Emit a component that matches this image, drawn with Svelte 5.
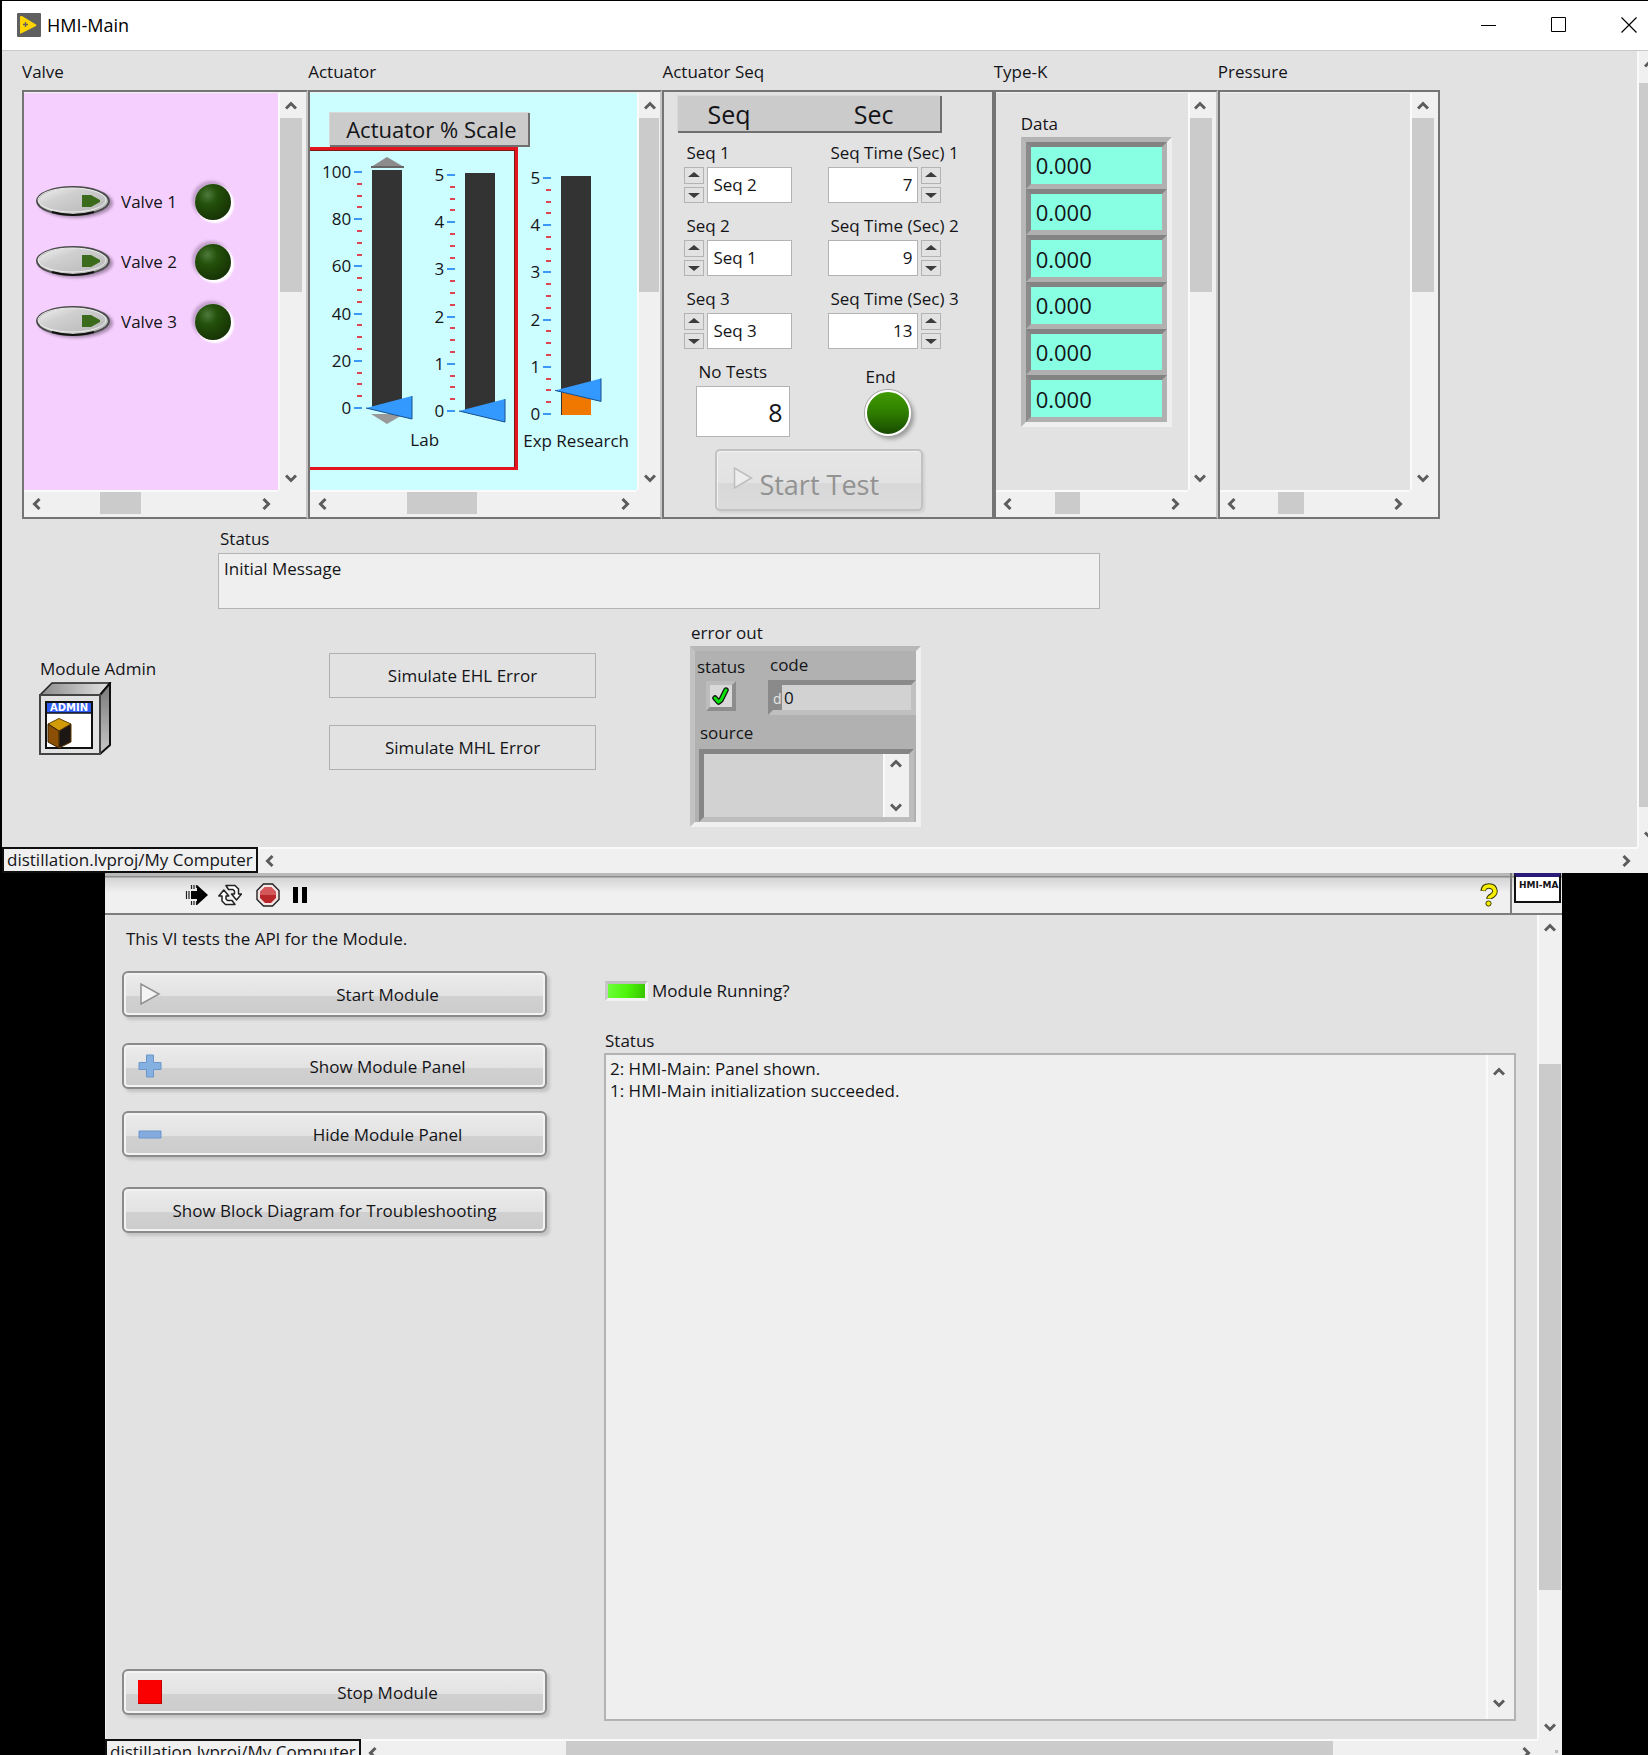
<script>
  const valves = $state([
    { name: 'Valve 1', open: false },
    { name: 'Valve 2', open: false },
    { name: 'Valve 3', open: false }
  ]);
  const sequences = $state(['Seq 2', 'Seq 1', 'Seq 3']);
  const times = $state([7, 9, 13]);
  const readings = ['0.000', '0.000', '0.000', '0.000', '0.000', '0.000'];
  const options = ['Seq 1', 'Seq 2', 'Seq 3'];
  const levels = $state([0, 0, 0.5]);
  const log = '2: HMI-Main: Panel shown.\n1: HMI-Main initialization succeeded.';
  let tests = $state(8);

  const TOP = 18;
  const SPAN = 236;

  function cycle(i, step) {
    const at = options.indexOf(sequences[i]);
    sequences[i] = options[(at + step + options.length) % options.length];
  }
</script>

{#snippet chevron(dir)}
  <svg class="chev {dir}" width="12" height="12" viewBox="0 0 12 12" aria-hidden="true">
    <path d="M1 8.5 6 3.5 11 8.5" fill="none" stroke="#5c5c5c" stroke-width="3" />
  </svg>
{/snippet}

{#snippet vbar(start, size)}
  <div class="vbar">
    <button aria-label="Scroll up">{@render chevron('up')}</button>
    <div class="track">
      {#if size}<div class="thumb" style:top="{start}%" style:height="{size}%"></div>{/if}
    </div>
    <button aria-label="Scroll down">{@render chevron('down')}</button>
  </div>
{/snippet}

{#snippet hbar(start, size)}
  <div class="hbar">
    <button aria-label="Scroll left">{@render chevron('left')}</button>
    <div class="track">
      {#if size}<div class="thumb" style:left="{start}%" style:width="{size}%"></div>{/if}
    </div>
    <button aria-label="Scroll right">{@render chevron('right')}</button>
  </div>
{/snippet}

{#snippet slider(i, name, labels, max, arrows)}
  {@const y = TOP + SPAN - (levels[i] / max) * SPAN}
  <div class="slider">
    <div class="scale">
      {#each labels as l}<span>{l}</span>{/each}
    </div>
    <div class="gauge">
      <svg width="60" height="272" viewBox="0 0 60 272" aria-hidden="true">
        {#each Array(21) as _, t}
          {#if t % 4 === 0}
            <rect x="0" y={Math.round(TOP + (t * SPAN) / 20) - 1} width="8" height="2" fill="#3d97f5" />
          {:else}
            <rect x="3" y={Math.round(TOP + (t * SPAN) / 20) - 1} width="5" height="2" fill="#dc4650" />
          {/if}
        {/each}
        {#if arrows}
          <path d="M17 13 33 3 50 13z" fill="#8c8c8c" />
          <path d="M17 12h33v2H17z" fill="#666" />
          <path d="M17 260 33 270 50 260z" fill="#999" />
        {/if}
        <rect x="18" y="16" width="30" height="239" fill="#333" />
        {#if levels[i] > 0}
          <rect x="19" y={y} width="29" height={TOP + SPAN + 1 - y} fill="#f07800" />
        {/if}
        <path d="M12 {y} L58 {y - 12} V{y + 11}z" fill="#3399ff" />
        <path d="M12 {y} L58 {y + 11} V{y - 12}" fill="none" stroke="#17508c" stroke-width="1" />
      </svg>
      <input type="range" min="0" {max} step="any" bind:value={levels[i]} aria-label={name} />
    </div>
  </div>
{/snippet}

{#snippet arrowPair(up, down)}
  <span class="spin">
    <button aria-label="Increment" onclick={up}>
      <svg width="12" height="6" viewBox="0 0 12 6"><path d="M0 5 6 0l6 5z" fill="#3c3c3c" /></svg>
    </button>
    <button aria-label="Decrement" onclick={down}>
      <svg width="12" height="6" viewBox="0 0 12 6"><path d="M0 1 6 6l6-5z" fill="#3c3c3c" /></svg>
    </button>
  </span>
{/snippet}

<div class="desktop">
  <main class="window">
    <header class="titlebar">
      <svg width="24" height="24" viewBox="0 0 24 24" aria-hidden="true">
        <rect width="24" height="24" rx="1" fill="#5f5f5f" />
        <path d="M3 4v16q0 1 1 .6L19 13q1-.8 0-1.500L5 3Q3 2.500 3 4z" fill="#fdd400" />
        <path d="M6 11.500h5M8.500 9v5" stroke="#5f5f5f" stroke-width="1.300" />
      </svg>
      <h1>HMI-Main</h1>
      <div class="caption">
        <button aria-label="Minimize"><svg width="16" height="16" viewBox="0 0 16 16"><path d="M0 8.500h15" stroke="#000" /></svg></button>
        <button aria-label="Maximize"><svg width="16" height="16" viewBox="0 0 16 16"><path d="M.5.5h14v14H.5z" fill="none" stroke="#000" /></svg></button>
        <button aria-label="Close"><svg width="16" height="16" viewBox="0 0 16 16"><path d="M.5.5l15 15M15.500.5l-15 15" stroke="#000" stroke-width="1.200" /></svg></button>
      </div>
    </header>

    <div class="view">
      <div class="panel-face">
        <div class="subpanels">
          <section>
            <h2>Valve</h2>
            <div class="pane">
              <div class="canvas pink">
                {#each valves as v}
                  <div class="valve">
                    <button class="toggle" aria-label={v.name} aria-pressed={v.open} onclick={() => (v.open = !v.open)}>
                      <svg width="80" height="38" viewBox="0 0 80 38">
                        <defs>
                          <linearGradient id="oval" x1="0" y1="0" x2="1" y2="1">
                            <stop offset="0" stop-color="#f6f6f6" />
                            <stop offset=".35" stop-color="#d0d0d0" />
                            <stop offset="1" stop-color="#b4b4b4" />
                          </linearGradient>
                          <filter id="soft" x="-20%" y="-30%" width="140%" height="160%"><feGaussianBlur stdDeviation="1.500" /></filter>
                        </defs>
                        <ellipse cx="41" cy="20" rx="37" ry="15" fill="#8d7594" opacity=".75" filter="url(#soft)" />
                        <ellipse cx="38" cy="18" rx="36" ry="14" fill="url(#oval)" stroke="#4c4c4c" stroke-width="2" />
                        <ellipse cx="37" cy="17" rx="34" ry="12" fill="none" stroke="#ededed" stroke-width="1" />
                        <path d="M17 29Q38 35 59 29" fill="none" stroke="#111" stroke-width="2" />
                        <path d="M47 12h9l9 5v2l-9 5h-9z" fill="#3c6b1c" />
                      </svg>
                    </button>
                    <span>{v.name}</span>
                    <i class="led dark"></i>
                  </div>
                {/each}
              </div>
              {@render vbar(0, 50)}
              {@render hbar(25, 20)}
            </div>
          </section>

          <section>
            <h2>Actuator</h2>
            <div class="pane wide">
              <div class="canvas cyan">
                <div class="plate scale-title">Actuator % Scale</div>
                <div class="gauges">
                  <div class="lab">
                    <div class="pair">
                      {@render slider(0, 'Lab percent', [100, 80, 60, 40, 20, 0], 100, true)}
                      {@render slider(1, 'Lab', [5, 4, 3, 2, 1, 0], 5, false)}
                    </div>
                    <span>Lab</span>
                  </div>
                  <div class="research">
                    {@render slider(2, 'Exp Research', [5, 4, 3, 2, 1, 0], 5, false)}
                    <span>Exp Research</span>
                  </div>
                </div>
              </div>
              {@render vbar(0, 50)}
              {@render hbar(26, 25)}
            </div>
          </section>

          <section>
            <h2>Actuator Seq</h2>
            <div class="pane bare">
              <div class="canvas seq">
                <div class="plate seq-title"><span>Seq</span><span>Sec</span></div>
                {#each sequences as s, i}
                  <div class="seq-row">
                    <div class="field">
                      <label for="seq{i}">Seq {i + 1}</label>
                      <div class="ctl">
                        {@render arrowPair(() => cycle(i, 1), () => cycle(i, -1))}
                        <select id="seq{i}" bind:value={sequences[i]}>
                          {#each options as o}<option>{o}</option>{/each}
                        </select>
                      </div>
                    </div>
                    <div class="field">
                      <label for="time{i}">Seq Time (Sec) {i + 1}</label>
                      <div class="ctl">
                        <input id="time{i}" type="text" bind:value={times[i]} />
                        {@render arrowPair(() => (times[i] = +times[i] + 1), () => (times[i] = +times[i] - 1))}
                      </div>
                    </div>
                  </div>
                {/each}
                <div class="tests-row">
                  <div class="tests">
                    <label for="tests">No Tests</label>
                    <input id="tests" type="text" bind:value={tests} />
                  </div>
                  <div class="end">
                    <span>End</span>
                    <i class="led-end"></i>
                  </div>
                </div>
                <button class="start-test" disabled>
                  <svg width="20" height="24" viewBox="0 0 20 24"><path d="M1.500 2v20L18.500 12z" fill="#ededed" stroke="#bdbdbd" stroke-width="1.500" /></svg>
                  Start Test
                </button>
              </div>
            </div>
          </section>

          <section>
            <h2>Type-K</h2>
            <div class="pane">
              <div class="canvas typek">
                <span>Data</span>
                <div class="array">
                  {#each readings as r}<output>{r}</output>{/each}
                </div>
              </div>
              {@render vbar(0, 50)}
              {@render hbar(24, 18)}
            </div>
          </section>

          <section>
            <h2>Pressure</h2>
            <div class="pane">
              <div class="canvas"></div>
              {@render vbar(0, 50)}
              {@render hbar(24, 18)}
            </div>
          </section>
        </div>

        <div class="message">
          <label for="msg">Status</label>
          <textarea id="msg" readonly>Initial Message</textarea>
        </div>

        <div class="tools">
          <div class="admin">
            <span>Module Admin</span>
            <svg width="73" height="73" viewBox="0 0 73 73" role="img" aria-label="Module Admin">
              <defs>
                <linearGradient id="lid" x1="0" x2="1"><stop offset="0" stop-color="#8a8a8a" /><stop offset="1" stop-color="#e4e4e4" /></linearGradient>
                <linearGradient id="side" x1="0" y1="0" x2="0" y2="1"><stop offset="0" stop-color="#777" /><stop offset="1" stop-color="#c8c8c8" /></linearGradient>
              </defs>
              <path d="M1 13 13 1h58L61 13z" fill="url(#lid)" stroke="#222" stroke-width="1.500" />
              <path d="M61 13 71 1v62L61 72z" fill="url(#side)" stroke="#111" stroke-width="2" />
              <path d="M1 13h60v59H1z" fill="#e2e2e2" stroke="#444" stroke-width="2" />
              <path d="M7 20h46v46H7z" fill="#fff" stroke="#111" stroke-width="2" />
              <path d="M8 21h44v10H8z" fill="#2f5cf0" />
              <path d="M7 31h46" stroke="#111" stroke-width="1.500" />
              <text x="30" y="29" text-anchor="middle" class="tag">ADMIN</text>
              <path d="M9 42 20 36.500 32 42 20 49z" fill="#d19b0a" stroke="#5f4300" />
              <path d="M9 42 20 49v17L9 60z" fill="#8c4f06" stroke="#3a2200" />
              <path d="M32 42 20 49v17l12-6z" fill="#1c1714" stroke="#5f3a05" />
            </svg>
          </div>
          <div class="sims">
            <button>Simulate EHL Error</button>
            <button>Simulate MHL Error</button>
          </div>
          <div class="error">
            <span class="error-name">error out</span>
            <div class="cluster">
              <div class="cluster-top">
                <div class="stat">
                  <span>status</span>
                  <div class="check">
                    <svg width="18" height="20" viewBox="0 0 18 20" role="img" aria-label="no error"><path d="M3 12l3.500 4L9 14l5-10" fill="none" stroke="#111" stroke-width="5.500" stroke-linejoin="round" stroke-linecap="round" /><path d="M3 12l3.500 4L9 14l5-10" fill="none" stroke="#0be00b" stroke-width="3" stroke-linejoin="round" stroke-linecap="round" /></svg>
                  </div>
                </div>
                <div class="code">
                  <label for="code">code</label>
                  <div class="code-box"><small>d</small><input id="code" type="text" value="0" readonly /></div>
                </div>
              </div>
              <label for="source">source</label>
              <div class="source-box">
                <textarea id="source" readonly></textarea>
                {@render vbar(0, 0)}
              </div>
            </div>
          </div>
        </div>
      </div>
      {@render vbar(1, 97)}
    </div>
    <footer class="bottom">
      <span class="ctx">distillation.lvproj/My Computer</span>
      {@render hbar(0, 0)}
    </footer>
  </main>

  <div class="window tester">
    <div class="toolbar">
      <button aria-label="Run">
        <svg width="24" height="24" viewBox="0 0 24 24"><path d="M6 8h6V2l11 10-11 10v-6H6z" fill="#000" /><path d="M1.500 8v8M4 8v8M6.500 2v4M9 2v4M11.500 2v3M6.500 18v4M9 18v4M11.500 18v4" stroke="#222" stroke-width="1.200" /></svg>
      </button>
      <button aria-label="Run continuously">
        <svg width="24" height="24" viewBox="0 0 24 24" fill="#fff" stroke="#222" stroke-width="1.500" stroke-linejoin="round"><path d="M8 2.500h9l3.500 3.500v5H23.500l-5 6-5-6H16.500V8L15 6.500H10.500z" /><path d="M17 21.500H7.500L4 18v-5H.8L5.800 7l5 6H8v3l1.500 1.500H14z" /></svg>
      </button>
      <button aria-label="Abort" class="abort">
        <svg width="24" height="24" viewBox="0 0 24 24"><path d="M7.500 1h9L23 7.500v9L16.500 23h-9L1 16.500v-9z" fill="#f4e4e4" stroke="#222" stroke-width="1.400" /><path d="M9 4h6l5 5v6l-5 5H9l-5-5V9z" fill="#b9262a" /><path d="M9 4h6l5 5v3H4V9z" fill="#d4575a" /></svg>
      </button>
      <button aria-label="Pause">
        <svg width="16" height="16" viewBox="0 0 16 16"><path d="M0 0h5v16H0zM9 0h5v16H9z" fill="#000" /></svg>
      </button>
      <button aria-label="Help" class="help">
        <svg width="18" height="24" viewBox="0 0 18 24"><path d="M3 8Q3.500 3 9 3t6 5q0 3-3.500 5Q9 14.300 9 16" fill="none" stroke="#3a3a00" stroke-width="5.500" /><path d="M3.500 7.500Q4 3 9 3t6 5q0 3-3.500 5Q9 14.300 9 15.500" fill="none" stroke="#f6ee00" stroke-width="3.600" /><circle cx="8.500" cy="20.500" r="2.600" fill="#f6ee00" stroke="#3a3a00" /></svg>
      </button>
      <div class="badge"><div>HMI-MA</div></div>
    </div>
    <div class="view">
      <div class="api">
        <div class="actions">
          <p>This VI tests the API for the Module.</p>
          <button class="btn">
            <svg width="24" height="24" viewBox="0 0 24 24"><path d="M3 2v20l18-10z" fill="#f4f4f4" stroke="#8f8f8f" stroke-width="1.500" /></svg>
            <span>Start Module</span>
          </button>
          <button class="btn show">
            <svg width="24" height="24" viewBox="0 0 24 24"><path d="M8.500 1h7v7.500H23v7h-7.500V23h-7v-7.500H1v-7h7.500z" fill="#84b0e2" stroke="#6a96cc" /></svg>
            <span>Show Module Panel</span>
          </button>
          <button class="btn hide">
            <svg width="24" height="24" viewBox="0 0 24 24"><path d="M1 9h22v7H1z" fill="#84aade" stroke="#6a96cc" /></svg>
            <span>Hide Module Panel</span>
          </button>
          <button class="btn diagram"><span>Show Block Diagram for Troubleshooting</span></button>
          <button class="btn stop">
            <svg width="24" height="24" viewBox="0 0 24 24"><path d="M0 0h24v24H0z" fill="#c40000" /><path d="M0 0h23v23H0z" fill="#fa0000" /></svg>
            <span>Stop Module</span>
          </button>
        </div>
        <div class="results">
          <div class="running"><i></i><span>Module Running?</span></div>
          <label for="log">Status</label>
          <div class="log">
            <textarea id="log" readonly value={log}></textarea>
            {@render vbar(0, 0)}
          </div>
        </div>
      </div>
      {@render vbar(16, 68)}
    </div>
    <footer class="bottom">
      <span class="ctx">distillation.lvproj/My Computer</span>
      {@render hbar(16, 68)}
      <svg width="24" height="24" viewBox="0 0 24 24" aria-hidden="true"><path d="M17 11h3v3h-3zM12 16h3v3h-3zM17 16h3v3h-3z" fill="#bdbdbd" /></svg>
    </footer>
  </div>
</div>

<style>
  :global(body) {
    background: #000;
  }
  .desktop {
    font: 17px/22px 'Open Sans', 'Noto Sans', sans-serif;
    color: #141418;
    background: #000;
    min-height: 100vh;
    overflow: hidden;
    display: flex;
    flex-direction: column;
    box-sizing: border-box;
    padding-top: 1px;
    --bar: 25px;
    --face: #e2e2e2;
  }
  .desktop :is(div, section, button, input, select, textarea, span) {
    box-sizing: border-box;
  }
  button,
  input,
  select,
  textarea {
    font: inherit;
    color: inherit;
    margin: 0;
    padding: 0;
    border: 0;
    border-radius: 0;
    background: none;
    appearance: none;
    resize: none;
    min-width: 0;
  }
  h1,
  h2,
  p {
    margin: 0;
    font: inherit;
  }
  svg {
    display: block;
    flex: none;
  }
  .window {
    margin-left: 2px;
    background: var(--face);
  }
  .titlebar {
    display: flex;
    align-items: center;
    gap: 6px;
    height: 50px;
    box-sizing: border-box;
    padding: 0 11px 2px 15px;
    background: #fff;
    border-bottom: 1px solid #c9c9c9;
  }
  .titlebar h1 {
    font-size: 18px;
    color: #000;
  }
  .caption {
    margin-left: auto;
    display: flex;
    gap: 54px;
  }
  .view {
    display: grid;
    grid-template-columns: minmax(0, 1fr) var(--bar);
  }
  main .view,
  main .bottom {
    margin-right: -14px;
  }

  /* scroll bars */
  .vbar,
  .hbar {
    display: flex;
    background: #f0f0f0;
  }
  .vbar {
    flex-direction: column;
    border-left: 2px solid #fafafa;
  }
  .hbar {
    border-top: 2px solid #fafafa;
  }
  .vbar button,
  .hbar button {
    flex: none;
    width: var(--bar);
    height: var(--bar);
    display: grid;
    place-items: center;
  }
  .vbar button {
    width: 21px;
  }
  .hbar button {
    height: 23px;
  }
  .track {
    flex: 1;
    position: relative;
  }
  .thumb {
    position: absolute;
    background: #cbcbcb;
  }
  .vbar .thumb {
    left: 0;
    right: 1px;
  }
  .hbar .thumb {
    top: 0;
    bottom: 1px;
  }
  .down {
    transform: rotate(180deg);
  }
  .left {
    transform: rotate(-90deg);
  }
  .right {
    transform: rotate(90deg);
  }

  /* sub panels */
  .panel-face {
    padding: 10px 0 20px;
  }
  .subpanels {
    display: grid;
    grid-template-columns: 286fr 354fr 331fr 224fr 222fr;
    margin: 0 197px 0 20px;
  }
  h2 {
    height: 29px;
    white-space: nowrap;
  }
  section {
    min-width: 0;
  }
  .pane {
    display: grid;
    grid-template-columns: minmax(0, 1fr) var(--bar);
    grid-template-rows: 397px var(--bar);
    padding: 1px 3px 2px 0;
    border: 2px solid #747474;
    border-right: 2px solid #c6c6c6;
    background: #f0f0f0;
  }
  .wide {
    padding-right: 0;
    grid-template-columns: minmax(0, 1fr) 23px;
  }
  .bare {
    grid-template: 422px / minmax(0, 1fr);
    background: var(--face);
    border-right-color: #747474;
  }
  section:last-child .pane {
    border-right-color: #747474;
  }
  .canvas {
    background: var(--face);
    overflow: hidden;
  }
  .pink {
    background: #f5cffe;
    padding-top: 90px;
  }
  .cyan {
    background: #ccfdff;
  }
  .valve {
    display: flex;
    align-items: center;
    height: 38px;
    margin-bottom: 22px;
    padding-left: 11px;
  }
  .toggle {
    width: 86px;
  }
  .valve span {
    width: 74px;
  }
  .led {
    width: 36px;
    height: 36px;
    border-radius: 50%;
    background: radial-gradient(circle at 35% 30%, #4f7a3c, #24510b 28%, #1b3d06 60%, #0d2602);
    box-shadow: 2px 2px 2px 1px #fff, -2px -2px 3px 1px #c3a0cc;
  }
  .plate {
    background: #cbcbcb;
    border: solid #6f6f6f;
    border-width: 0 2px 2px 0;
    box-shadow: -1px -1px 0 #d9d9d9;
  }
  .scale-title {
    width: 200px;
    margin: 20px 0 0 20px;
    padding-left: 16px;
    font-size: 22px;
    line-height: 32px;
    height: 34px;
    white-space: nowrap;
    position: relative;
  }
  .gauges {
    display: flex;
  }
  .lab {
    width: 208px;
    height: 323px;
    border: 3px solid #e3141e;
    border-left: 0;
    box-shadow: inset 0 1px 0 #7c1a1a, inset -1px 0 0 #7c1a1a;
    display: flex;
    flex-direction: column;
    align-items: center;
    padding: 4px 0 0 24px;
  }
  .pair {
    display: flex;
    gap: 13px;
    align-self: flex-start;
    margin-left: -15px;
  }
  .slider {
    display: flex;
    gap: 3px;
  }
  .scale {
    width: 32px;
    height: 258px;
    margin-top: 7px;
    text-align: right;
    display: flex;
    flex-direction: column;
    justify-content: space-between;
  }
  .slider + .slider {
    padding-top: 3px;
  }
  .slider + .slider .scale,
  .research .scale {
    width: 17px;
  }
  .gauge {
    position: relative;
  }
  .gauge input {
    position: absolute;
    inset: 0;
    width: 100%;
    height: 100%;
    opacity: 0;
    writing-mode: vertical-lr;
    direction: rtl;
  }
  .research {
    padding: 13px 0 0 5px;
    white-space: nowrap;
  }
  .research > span {
    display: block;
    line-height: 18px;
  }
  .seq {
    padding: 3px 0 0 14px;
  }
  .seq-title {
    width: 264px;
    height: 37px;
    display: flex;
    justify-content: space-between;
    padding: 0 47px 0 29px;
    font-size: 25px;
    line-height: 36px;
  }
  .seq-row {
    display: grid;
    grid-template-columns: 144px 1fr;
    padding: 9px 0 0 6px;
    height: 73px;
    white-space: nowrap;
  }
  .field label {
    display: block;
    height: 25px;
    padding-left: 2px;
  }
  .ctl {
    display: flex;
    gap: 3px;
    height: 36px;
  }
  .spin {
    width: 20px;
    display: grid;
    gap: 3px;
  }
  .spin button {
    display: grid;
    place-items: center;
    border: 1px solid #b3b3b3;
  }
  select,
  .ctl input,
  .tests input {
    background: #fff;
    border: 1px solid #b3b3b3;
  }
  select {
    width: 85px;
    padding-left: 5px;
  }
  .ctl input {
    width: 90px;
    padding-right: 5px;
    text-align: right;
  }
  .tests-row {
    display: flex;
    padding: 9px 0 0 18px;
  }
  .tests {
    width: 169px;
    display: grid;
    gap: 3px;
  }
  .tests label {
    padding-left: 2px;
  }
  .tests input {
    width: 94px;
    height: 51px;
    font-size: 25px;
    text-align: right;
    padding-right: 7px;
  }
  .end {
    padding-top: 5px;
  }
  .led-end {
    display: block;
    width: 46px;
    height: 46px;
    margin-top: 2px;
    box-sizing: border-box;
    border-radius: 50%;
    border: 2px solid #fff;
    background: linear-gradient(#3f9b00, #2f7d00 50%, #174a00);
    box-shadow: 0 0 0 1px #a8a8a8, 3px 3px 4px #999;
  }
  .start-test {
    display: flex;
    align-items: center;
    gap: 6px;
    width: 208px;
    height: 62px;
    margin: 12px 0 0 37px;
    padding: 10px 0 0 16px;
    border: 2px solid #c2c2c2;
    border-radius: 5px;
    font-size: 27px;
    color: #929292;
    white-space: nowrap;
    background: linear-gradient(#e6e6e6, #e2e2e2 55%, #d8d8d8 56%, #dcdcdc);
    box-shadow: inset 1px 1px 0 #f3f3f3, 2px 2px 2px #d2d2d2;
  }
  .start-test svg {
    margin-top: -14px;
  }
  .typek {
    padding: 20px 0 0 25px;
  }
  .array {
    width: 151px;
    height: 290px;
    margin-top: 2px;
    border: 5px solid;
    border-color: #b3b3b3 #efefef #efefef #b8b8b8;
    display: grid;
  }
  .array output {
    box-sizing: border-box;
    background: #88ffe2;
    border: 5px solid;
    border-color: #838383 #b0b0b0 #b0b0b0 #8b8b8b;
    padding-left: 5px;
    font-size: 22px;
    display: flex;
    align-items: center;
  }

  /* lower half of the main panel */
  .message {
    margin: 9px 537px 0 216px;
  }
  .message label {
    display: block;
    height: 25px;
    padding-left: 2px;
  }
  .message textarea {
    display: block;
    width: 100%;
    height: 56px;
    padding: 4px 5px;
    background: #efefef;
    border: 1px solid #b3b3b3;
  }
  .tools {
    display: grid;
    grid-template-columns: 289px 361px 1fr;
    padding: 13px 0 0 37px;
  }
  .admin {
    padding-top: 36px;
  }
  .admin span {
    display: block;
    height: 24px;
    padding-left: 1px;
  }
  .tag {
    font: bold 10px 'DejaVu Sans', sans-serif;
    fill: #fff;
  }
  .sims {
    display: grid;
    grid-template: 45px 45px / 267px;
    gap: 27px;
    padding: 31px 0 0 1px;
  }
  .sims button {
    border: 1px solid #b0b0b0;
    padding-top: 1px;
  }
  .error-name {
    display: block;
    height: 24px;
    padding-left: 1px;
  }
  .error {
    padding-left: 1px;
  }
  .cluster {
    width: 231px;
    height: 181px;
    border: 5px solid;
    border-color: #b8b8b8 #f0f0f0 #f0f0f0 #c2c2c2;
    background: #b1b1b1;
  }
  .cluster-top {
    display: flex;
    height: 70px;
    padding: 3px 0 0 2px;
  }
  .stat {
    flex: none;
    width: 71px;
    padding-top: 2px;
  }
  .check {
    width: 30px;
    height: 30px;
    margin: 3px 0 0 9px;
    border: 4px solid;
    border-color: #bcbcbc #8d8d8d #8d8d8d #bcbcbc;
    background: #d9d9d9;
    display: grid;
    place-items: center;
  }
  .code {
    flex: 1;
    min-width: 0;
  }
  .code label {
    padding-left: 2px;
  }
  .code-box {
    display: flex;
    height: 35px;
    margin-top: 4px;
    border: 5px solid;
    border-color: #8a8a8a #c0c0c0 #c0c0c0 #8a8a8a;
    background: #d2d2d2;
  }
  .code-box small {
    background: #8a8a8a;
    color: #e6e6e6;
    font-size: 14px;
    line-height: 28px;
    width: 9px;
  }
  .code-box input {
    flex: 1;
    padding-left: 2px;
  }
  .cluster > label {
    display: block;
    height: 27px;
    padding: 1px 0 0 5px;
  }
  .source-box {
    height: 73px;
    margin: 0 2px 0 4px;
    border: 5px solid;
    border-color: #858585 #bdbdbd #bdbdbd #858585;
    background: #d2d2d2;
    display: grid;
    grid-template-columns: 1fr 26px;
  }
  .source-box textarea {
    width: 100%;
    height: 100%;
  }
  .source-box .vbar button {
    height: 20px;
  }

  .bottom {
    display: flex;
    height: 26px;
    background: #f0f0f0;
  }
  .bottom .hbar {
    flex: 1;
  }
  .ctx {
    border: 2px solid #101010;
    padding: 0 3px;
    background: #f0f0f0;
    white-space: nowrap;
  }
  main .bottom .hbar {
    margin-right: 24px;
  }

  /* module tester window */
  .tester {
    flex: 1;
    display: flex;
    flex-direction: column;
    margin: 0 86px -10px 105px;
  }
  .tester .view {
    flex: 1;
  }
  .toolbar {
    display: flex;
    align-items: center;
    height: 42px;
    flex: none;
    padding: 1px 0 0 80px;
    gap: 9px;
    border-top: 3px solid #b9b9b9;
    border-bottom: 2px solid #7d7d7d;
    background: linear-gradient(#8c8c8c 1px, #d4d4d4 2px, #f0f0f0 45%);
  }
  .toolbar .abort {
    margin: 0 4px 0 5px;
  }
  .help {
    margin-left: auto;
  }
  .badge {
    align-self: stretch;
    display: flex;
    margin: -4px 0 0 3px;
    padding: 0 1px 10px 2px;
    border-left: 2px solid #7d7d7d;
  }
  .badge div {
    width: 47px;
    padding: 3px 0 0 3px;
    border: 2px solid #101010;
    border-top: 4px solid #2a1b78;
    background: #fff;
    font: bold 9px/10px 'DejaVu Sans', sans-serif;
    white-space: nowrap;
  }
  .api {
    display: flex;
    padding: 0 21px 18px 16px;
    border-left: 1px solid #f0f0f0;
  }
  .actions {
    display: flex;
    flex-direction: column;
    width: 425px;
    padding: 13px 0 6px;
    flex: none;
  }
  .actions p {
    padding: 0 0 21px 4px;
  }
  .btn {
    flex: none;
    display: flex;
    align-items: center;
    height: 46px;
    padding: 0 14px;
    border: 2px solid #8b8b8b;
    border-radius: 6px;
    background: linear-gradient(#ececec, #e2e2e2 54%, #d0d0d0 56%, #cccccc);
    box-shadow: inset 0 0 0 2px #f3f3f3, 3px 3px 3px #c4c4c4;
  }
  .btn span {
    flex: 1;
    padding: 1px 0 0 82px;
    text-align: center;
  }
  .show {
    margin-top: 26px;
  }
  .hide {
    margin-top: 22px;
  }
  .diagram {
    margin-top: 30px;
  }
  .diagram span {
    padding-left: 0;
  }
  .stop {
    margin-top: auto;
  }
  .results {
    flex: 1;
    display: flex;
    flex-direction: column;
    padding: 65px 0 0 57px;
  }
  .running {
    display: flex;
    align-items: center;
    gap: 4px;
    padding-left: 1px;
    height: 22px;
  }
  .running i {
    width: 43px;
    height: 20px;
    box-sizing: border-box;
    border: 3px solid;
    border-color: #c0c0c0 #f2f2f2 #f2f2f2 #c8c8c8;
    background: linear-gradient(100deg, #6dff3a, #4df50c 50%, #36c400);
  }
  .results label {
    padding: 28px 0 1px 1px;
  }
  .log {
    flex: 1;
    display: grid;
    grid-template-columns: 1fr 28px;
    border: 2px solid #b3b3b3;
    background: #efefef;
  }
  .log textarea {
    padding: 3px 4px;
  }
  .log .vbar {
    padding: 4px 0;
  }
</style>
